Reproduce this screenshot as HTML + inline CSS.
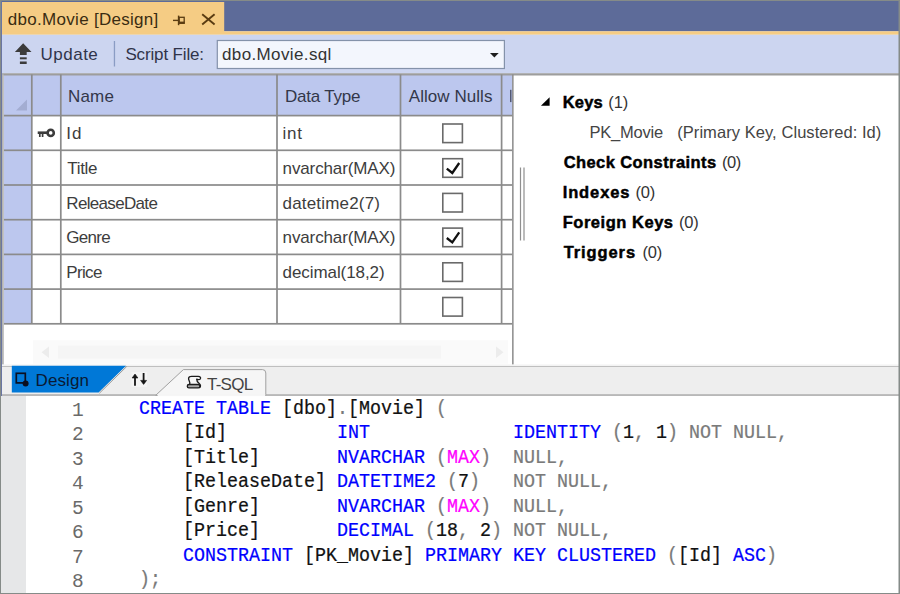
<!DOCTYPE html>
<html><head><meta charset="utf-8"><title>dbo.Movie [Design]</title>
<style>
html,body{margin:0;padding:0;}
body{width:900px;height:594px;position:relative;overflow:hidden;background:#858b88;font-family:"Liberation Sans",sans-serif;}
#win{position:absolute;left:1px;top:1px;width:898px;height:592px;background:#fff;overflow:hidden;}
#all{position:absolute;left:-1px;top:-1px;width:900px;height:594px;}
.abs{position:absolute;}
.t{position:absolute;white-space:pre;line-height:20px;font-family:"Liberation Sans",sans-serif;}
svg{position:absolute;left:0;top:0;}
.cl{position:absolute;left:139px;white-space:pre;font-family:"Liberation Mono",monospace;font-size:18.33px;letter-spacing:0px;line-height:24px;-webkit-text-stroke:0.22px currentColor;transform:scale(1,1.09);transform-origin:0 16.9px;}
.cl span{-webkit-text-stroke:0.22px currentColor;}
.ln{position:absolute;left:40px;width:43px;text-align:right;white-space:pre;font-family:"Liberation Mono",monospace;font-size:19.5px;letter-spacing:-0.7px;line-height:24px;color:#6a6a6a;}
</style></head><body>
<div id="win"><div id="all">
<!-- backgrounds are drawn inside the svg below -->
<svg width="900" height="594" viewBox="0 0 900 594">
<rect x="1" y="1" width="898" height="30.4" fill="#5d6b99"/><rect x="2" y="2" width="222.2" height="31" fill="#f5cc84"/><rect x="1" y="31.3" width="898" height="3.5" fill="#f5cc84"/><rect x="1" y="34.75" width="898" height="38.6" fill="#ccd5f0"/>
<path d="M23.15 43.3 L31.5 52.1 L26.7 52.1 L26.7 54.9 L19.9 54.9 L19.9 52.1 L14.9 52.1 Z" fill="#3b3b3b"/>
<rect x="19.9" y="57.3" width="6.8" height="2" fill="#3b3b3b"/><rect x="19.9" y="61.5" width="6.8" height="2.5" fill="#3b3b3b"/>
<rect x="113.8" y="41" width="1.3" height="25.5" fill="#8a9cc4"/>
<rect x="217.3" y="40.5" width="287.1" height="28" fill="#f3f6fd" stroke="#8492aa" stroke-width="1.2"/>
<path d="M490 52.9 L498.7 52.9 L494.35 57.5 Z" fill="#1e1e1e"/>
<g stroke="#5a3c12" fill="none"><path d="M173 20.4 H178.5" stroke-width="1.4"/><path d="M178.6 15.6 V25.2" stroke-width="1.5"/><rect x="179.2" y="17.3" width="5" height="6" stroke-width="1.3"/><path d="M179 22.6 H184.6" stroke-width="2"/></g>
<path d="M202.2 14.2 L214.6 24.4 M214.6 14.2 L202.2 24.4" stroke="#5a3c12" stroke-width="1.9" fill="none"/>
<rect x="3.8" y="74.4" width="508.40000000000003" height="41.19999999999999" fill="#bcc7ee"/>
<rect x="3.8" y="115.6" width="28.0" height="208.20000000000002" fill="#bcc7ee"/>
<rect x="2" y="73.25" width="897" height="2.25" fill="#9d9d9d"/>
<rect x="3.8" y="114.75" width="508.40000000000003" height="1.7" fill="#8b8b8b"/>
<rect x="3.8" y="149.45000000000002" width="508.40000000000003" height="1.7" fill="#8b8b8b"/>
<rect x="3.8" y="184.15" width="508.40000000000003" height="1.7" fill="#8b8b8b"/>
<rect x="3.8" y="218.85" width="508.40000000000003" height="1.7" fill="#8b8b8b"/>
<rect x="3.8" y="253.55" width="508.40000000000003" height="1.7" fill="#8b8b8b"/>
<rect x="3.8" y="288.25" width="508.40000000000003" height="1.7" fill="#8b8b8b"/>
<rect x="3.8" y="322.95" width="508.40000000000003" height="1.7" fill="#8b8b8b"/>
<rect x="30.95" y="74.4" width="1.7" height="249.4" fill="#8b8b8b"/>
<rect x="59.949999999999996" y="74.4" width="1.7" height="249.4" fill="#8b8b8b"/>
<rect x="276.15" y="74.4" width="1.7" height="249.4" fill="#8b8b8b"/>
<rect x="399.65" y="74.4" width="1.7" height="249.4" fill="#8b8b8b"/>
<rect x="500.75" y="74.4" width="1.7" height="249.4" fill="#8b8b8b"/>
<rect x="2" y="74.4" width="1.8" height="290.29999999999995" fill="#b6b6b6"/>
<rect x="512.1" y="74.4" width="1.5" height="290.29999999999995" fill="#8b8b8b"/>
<path d="M27 99.5 L27 110.5 L16 110.5 Z" fill="#a3add2"/>
<rect x="442.8" y="124.00" width="19.6" height="18.6" fill="#fff" stroke="#6a6a6a" stroke-width="1.6"/>
<rect x="442.8" y="158.70" width="19.6" height="18.6" fill="#fff" stroke="#6a6a6a" stroke-width="1.6"/>
<path d="M446.8 168.60 L452.3 173.00 L459.2 163.00" fill="none" stroke="#111" stroke-width="2.3"/>
<rect x="442.8" y="193.40" width="19.6" height="18.6" fill="#fff" stroke="#6a6a6a" stroke-width="1.6"/>
<rect x="442.8" y="228.10" width="19.6" height="18.6" fill="#fff" stroke="#6a6a6a" stroke-width="1.6"/>
<path d="M446.8 238.00 L452.3 242.40 L459.2 232.40" fill="none" stroke="#111" stroke-width="2.3"/>
<rect x="442.8" y="262.80" width="19.6" height="18.6" fill="#fff" stroke="#6a6a6a" stroke-width="1.6"/>
<rect x="442.8" y="297.50" width="19.6" height="18.6" fill="#fff" stroke="#6a6a6a" stroke-width="1.6"/>
<g fill="none" stroke="#3c3c3c"><circle cx="50.7" cy="132.9" r="3.1" stroke-width="2.6"/><path d="M37.7 132.7 H47.6" stroke-width="2.6"/><path d="M39.8 133 V137 M42.6 133 V137" stroke-width="1.7"/></g>
<rect x="510.2" y="89.8" width="1.2" height="12.3" fill="#3a3f55"/>
<rect x="519.9" y="167.5" width="1.2" height="73" fill="#8f8f8f"/><rect x="523.4" y="167.5" width="1.2" height="73" fill="#8f8f8f"/>
<path d="M549.6 97.2 L549.6 105.7 L540.9 105.7 Z" fill="#000"/>
<rect x="33" y="340.3" width="475" height="23.5" fill="#fafafa"/><rect x="58" y="345.7" width="383" height="13" fill="#f5f5f5"/>
<path d="M49 346.5 L49 358 L41.5 352.2 Z" fill="#ececec"/><path d="M496 346.5 L496 358 L503.5 352.2 Z" fill="#ececec"/>
<rect x="2" y="364.7" width="897" height="31.3" fill="#eeeeee"/>
<rect x="2" y="365.9" width="897" height="0.9" fill="#b4b4b4"/><rect x="2" y="364.7" width="897" height="1.2" fill="#f4f4f4"/>
<rect x="2" y="394.2" width="897" height="1.7" fill="#b2b2b2"/>
<path d="M11.8 365.8 L126 365.8 L98.6 392.6 L11.8 392.6 Z" fill="#0078d7"/>
<path d="M126.8 366.4 L99.4 393.2" stroke="#9a9a9a" stroke-width="1" fill="none"/>
<rect x="16.3" y="373.3" width="9" height="9.6" fill="none" stroke="#0b1020" stroke-width="1.7"/><circle cx="25.6" cy="383.4" r="3" fill="#0b1020"/>
<rect x="131.5" y="372" width="15.5" height="15" fill="#f4f4f4"/><g stroke="#151515" stroke-width="1.8" fill="#151515"><path d="M135 385.8 V377" fill="none"/><path d="M143.6 373 V381" fill="none"/><path d="M135 374 L137.9 378 L132.1 378 Z" stroke-width="0.6"/><path d="M143.6 384.4 L146.6 380.4 L140.6 380.4 Z" stroke-width="0.6"/></g>
<path d="M155.6 395.4 L183.4 369.6 L262.5 369.6 Q265.8 369.6 265.8 373 L265.8 395.4 Z" fill="#f6f6f6" stroke="#a0a0a0" stroke-width="1"/>
<rect x="157.6" y="394.1" width="107.6" height="2" fill="#f6f6f6"/>
<g stroke="#1c1c1c" stroke-width="1.35" fill="none" stroke-linecap="round"><path d="M189.6 384.3 C190.8 382 188.2 380.6 188.6 378.2 C188.9 376.7 189.9 376.3 191.6 376.3 H198.2 C200.2 376.3 200.9 377.6 200.4 378.7 C199.9 379.7 198.4 379.8 197 379.5"/><path d="M196.8 379.2 C196.6 381 197.8 382.4 199.2 383.5 C200.7 384.7 200.9 386.4 199.7 387.5"/><rect x="187.3" y="384.5" width="12.6" height="3.4" rx="1.7" fill="#a8a8a8"/></g>
<rect x="1" y="1" width="1" height="592" fill="#6a76a3"/><rect x="898.5" y="0" width="1.5" height="594" fill="#858b88"/>
</svg>
<!-- code editor -->
<div class="abs" style="left:1px;top:396px;width:25.4px;height:197px;background:#e6e7e8;"></div>
<div class="cl" style="top:398.00px"><span style="color:#0000ff">CREATE TABLE </span><span style="color:#111111">[dbo]</span><span style="color:#7a7a7a">.</span><span style="color:#111111">[Movie] </span><span style="color:#7a7a7a">(</span></div>
<div class="ln" style="top:399.00px">1</div>
<div class="cl" style="top:422.45px">    <span style="color:#111111">[Id]          </span><span style="color:#0000ff">INT             IDENTITY </span><span style="color:#7a7a7a">(</span><span style="color:#111111">1</span><span style="color:#7a7a7a">, </span><span style="color:#111111">1</span><span style="color:#7a7a7a">) NOT NULL,</span></div>
<div class="ln" style="top:423.45px">2</div>
<div class="cl" style="top:446.90px">    <span style="color:#111111">[Title]       </span><span style="color:#0000ff">NVARCHAR </span><span style="color:#7a7a7a">(</span><span style="color:#ff00ff">MAX</span><span style="color:#7a7a7a">)  NULL,</span></div>
<div class="ln" style="top:447.90px">3</div>
<div class="cl" style="top:471.35px">    <span style="color:#111111">[ReleaseDate] </span><span style="color:#0000ff">DATETIME2 </span><span style="color:#7a7a7a">(</span><span style="color:#111111">7</span><span style="color:#7a7a7a">)   NOT NULL,</span></div>
<div class="ln" style="top:472.35px">4</div>
<div class="cl" style="top:495.80px">    <span style="color:#111111">[Genre]       </span><span style="color:#0000ff">NVARCHAR </span><span style="color:#7a7a7a">(</span><span style="color:#ff00ff">MAX</span><span style="color:#7a7a7a">)  NULL,</span></div>
<div class="ln" style="top:496.80px">5</div>
<div class="cl" style="top:520.25px">    <span style="color:#111111">[Price]       </span><span style="color:#0000ff">DECIMAL </span><span style="color:#7a7a7a">(</span><span style="color:#111111">18</span><span style="color:#7a7a7a">, </span><span style="color:#111111">2</span><span style="color:#7a7a7a">) NOT NULL,</span></div>
<div class="ln" style="top:521.25px">6</div>
<div class="cl" style="top:544.70px">    <span style="color:#0000ff">CONSTRAINT </span><span style="color:#111111">[PK_Movie] </span><span style="color:#0000ff">PRIMARY KEY CLUSTERED </span><span style="color:#7a7a7a">(</span><span style="color:#111111">[Id] </span><span style="color:#0000ff">ASC</span><span style="color:#7a7a7a">)</span></div>
<div class="ln" style="top:545.70px">7</div>
<div class="cl" style="top:569.15px"><span style="color:#7a7a7a">);</span></div>
<div class="ln" style="top:570.15px">8</div>
<!-- labels -->
<span class="t" style="left:7.80px;top:9.91px;font-size:17px;letter-spacing:0.294px;color:#3a2c12;">dbo.Movie [Design]</span>
<span class="t" style="left:40.50px;top:45.21px;font-size:17px;letter-spacing:0.500px;color:#30344a;">Update</span>
<span class="t" style="left:125.40px;top:45.31px;font-size:17px;letter-spacing:-0.145px;color:#30344a;">Script File:</span>
<span class="t" style="left:222.00px;top:45.31px;font-size:17px;letter-spacing:0.375px;color:#333333;">dbo.Movie.sql</span>
<span class="t" style="left:68.00px;top:87.01px;font-size:17px;letter-spacing:0.167px;color:#33374a;">Name</span>
<span class="t" style="left:284.90px;top:87.01px;font-size:17px;letter-spacing:-0.200px;color:#33374a;">Data Type</span>
<span class="t" style="left:408.80px;top:87.01px;font-size:17px;letter-spacing:0.050px;color:#33374a;">Allow Nulls</span>
<span class="t" style="left:66.30px;top:124.31px;font-size:17px;letter-spacing:0.900px;color:#3d3d3d;">Id</span>
<span class="t" style="left:282.60px;top:124.31px;font-size:17px;letter-spacing:0.700px;color:#3d3d3d;">int</span>
<span class="t" style="left:67.30px;top:159.01px;font-size:17px;letter-spacing:-0.325px;color:#3d3d3d;">Title</span>
<span class="t" style="left:282.60px;top:159.01px;font-size:17px;letter-spacing:-0.133px;color:#3d3d3d;">nvarchar(MAX)</span>
<span class="t" style="left:66.30px;top:193.71px;font-size:17px;letter-spacing:-0.670px;color:#3d3d3d;">ReleaseDate</span>
<span class="t" style="left:282.60px;top:193.71px;font-size:17px;letter-spacing:0.173px;color:#3d3d3d;">datetime2(7)</span>
<span class="t" style="left:66.30px;top:228.41px;font-size:17px;letter-spacing:-0.725px;color:#3d3d3d;">Genre</span>
<span class="t" style="left:282.60px;top:228.41px;font-size:17px;letter-spacing:-0.133px;color:#3d3d3d;">nvarchar(MAX)</span>
<span class="t" style="left:66.30px;top:263.11px;font-size:17px;letter-spacing:-0.650px;color:#3d3d3d;">Price</span>
<span class="t" style="left:282.60px;top:263.11px;font-size:17px;letter-spacing:-0.083px;color:#3d3d3d;">decimal(18,2)</span>
<span class="t" style="left:562.70px;top:91.78px;font-size:16.5px;letter-spacing:0.200px;color:#000;font-weight:bold;-webkit-text-stroke:0.45px #000;">Keys</span>
<span class="t" style="left:608.20px;top:91.78px;font-size:16.5px;letter-spacing:-0.050px;color:#333;">(1)</span>
<span class="t" style="left:589.60px;top:121.68px;font-size:16.5px;letter-spacing:-0.243px;color:#444;">PK_Movie</span>
<span class="t" style="left:677.20px;top:121.68px;font-size:16.5px;letter-spacing:0.067px;color:#444;">(Primary Key, Clustered: Id)</span>
<span class="t" style="left:563.70px;top:151.58px;font-size:16.5px;letter-spacing:0.412px;color:#000;font-weight:bold;-webkit-text-stroke:0.45px #000;">Check Constraints</span>
<span class="t" style="left:722.00px;top:151.58px;font-size:16.5px;letter-spacing:-0.500px;color:#333;">(0)</span>
<span class="t" style="left:562.70px;top:181.58px;font-size:16.5px;letter-spacing:0.883px;color:#000;font-weight:bold;-webkit-text-stroke:0.45px #000;">Indexes</span>
<span class="t" style="left:635.50px;top:181.58px;font-size:16.5px;letter-spacing:-0.250px;color:#333;">(0)</span>
<span class="t" style="left:562.70px;top:211.58px;font-size:16.5px;letter-spacing:0.527px;color:#000;font-weight:bold;-webkit-text-stroke:0.45px #000;">Foreign Keys</span>
<span class="t" style="left:679.00px;top:211.58px;font-size:16.5px;letter-spacing:-0.250px;color:#333;">(0)</span>
<span class="t" style="left:563.70px;top:241.58px;font-size:16.5px;letter-spacing:0.900px;color:#000;font-weight:bold;-webkit-text-stroke:0.45px #000;">Triggers</span>
<span class="t" style="left:642.50px;top:241.58px;font-size:16.5px;letter-spacing:-0.250px;color:#333;">(0)</span>
<span class="t" style="left:35.60px;top:370.91px;font-size:17px;letter-spacing:0.080px;color:#0a1a33;">Design</span>
<span class="t" style="left:207.00px;top:374.81px;font-size:17px;letter-spacing:-0.750px;color:#444444;">T-SQL</span>
</div></div>
</body></html>
